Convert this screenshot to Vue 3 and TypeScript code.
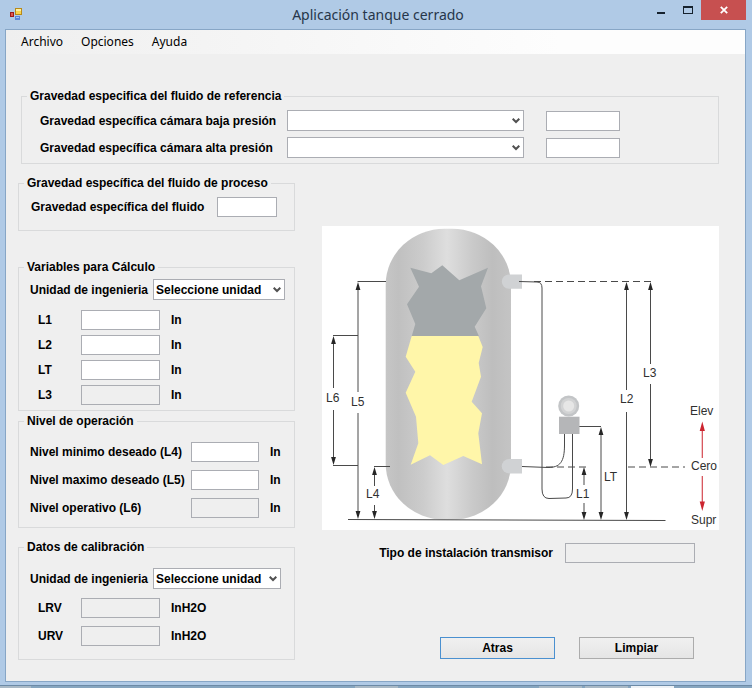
<script setup lang="ts">
import { reactive } from 'vue'

interface Dimension {
  x: number
  top: number
  bottom: number
  gapTop: number
  gapBottom: number
}

interface Field {
  id: string
  label: string
  unit: string
  readonly: boolean
}

const menus: string[] = ['Archivo', 'Opciones', 'Ayuda']

const gravities = [
  { id: 'baja', label: 'Gravedad específica cámara baja presión' },
  { id: 'alta', label: 'Gravedad específica cámara alta presión' },
]

const variables: Field[] = [
  { id: 'l1', label: 'L1', unit: 'In', readonly: false },
  { id: 'l2', label: 'L2', unit: 'In', readonly: false },
  { id: 'lt', label: 'LT', unit: 'In', readonly: false },
  { id: 'l3', label: 'L3', unit: 'In', readonly: true },
]

const levels: Field[] = [
  { id: 'l4', label: 'Nivel minimo deseado (L4)', unit: 'In', readonly: false },
  { id: 'l5', label: 'Nivel maximo deseado (L5)', unit: 'In', readonly: false },
  { id: 'l6', label: 'Nivel operativo (L6)', unit: 'In', readonly: true },
]

const calibration: Field[] = [
  { id: 'lrv', label: 'LRV', unit: 'InH2O', readonly: true },
  { id: 'urv', label: 'URV', unit: 'InH2O', readonly: true },
]

const values = reactive<Record<string, string>>({})

function clearAll(): void {
  Object.keys(values).forEach((key) => {
    values[key] = ''
  })
}

const dimensions: Dimension[] = [
  { x: 333.5, top: 336, bottom: 465, gapTop: 388, gapBottom: 410 },
  { x: 358, top: 282, bottom: 519, gapTop: 392, gapBottom: 413 },
  { x: 374.5, top: 467, bottom: 519, gapTop: 486, gapBottom: 505 },
  { x: 584, top: 467, bottom: 520, gapTop: 485, gapBottom: 503 },
  { x: 601, top: 427, bottom: 520, gapTop: 470, gapBottom: 470 },
  { x: 626.5, top: 282, bottom: 520, gapTop: 390, gapBottom: 412 },
  { x: 650.5, top: 282, bottom: 467, gapTop: 364, gapBottom: 384 },
]

const marks = [
  { text: 'L6', x: 326, y: 402 },
  { text: 'L5', x: 351, y: 406 },
  { text: 'L4', x: 366, y: 498 },
  { text: 'L1', x: 576, y: 498 },
  { text: 'LT', x: 604, y: 481 },
  { text: 'L2', x: 620, y: 403 },
  { text: 'L3', x: 643, y: 377 },
  { text: 'Elev', x: 690, y: 415 },
  { text: 'Cero', x: 691, y: 470 },
  { text: 'Supr', x: 691, y: 524 },
]

function up(x: number, y: number): string {
  return `M${x} ${y}l2.4 8h-4.8z`
}

function down(x: number, y: number): string {
  return `M${x} ${y}l2.4 -8h-4.8z`
}
</script>

<template>
  <div class="window">
    <header class="titlebar">
      <svg class="app-icon" width="14" height="14" viewBox="0 0 14 14" aria-hidden="true">
        <rect x="0.5" y="4.5" width="3" height="4" fill="#e0584e" stroke="#9c1c1c" />
        <rect x="5.5" y="0.5" width="6" height="6" fill="#f8d34c" stroke="#b78a1a" />
        <rect x="6" y="1" width="5" height="2" fill="#fdeea0" />
        <rect x="5" y="8" width="5" height="4" fill="#5b86d8" />
        <rect x="6" y="9" width="3" height="1" fill="#a9c4f2" />
      </svg>
      <h1>Aplicación tanque cerrado</h1>
      <div class="window-buttons">
        <button type="button" class="win-btn" aria-label="Minimizar">
          <svg width="10" height="10" viewBox="0 0 10 10"><rect x="1" y="7" width="8" height="2" fill="#16222e" /></svg>
        </button>
        <button type="button" class="win-btn" aria-label="Maximizar">
          <svg width="10" height="10" viewBox="0 0 10 10"><path d="M0 1h10v8H0zM1 3v5h8V3z" fill="#16222e" fill-rule="evenodd" /></svg>
        </button>
        <button type="button" class="win-btn close" aria-label="Cerrar">
          <svg width="8" height="8" viewBox="0 0 8 8"><path d="M0.8 0.8L7.2 7.2M7.2 0.8L0.8 7.2" stroke="#fff" stroke-width="1.8" /></svg>
        </button>
      </div>
    </header>

    <div class="client">
      <nav class="menu">
        <button v-for="menu in menus" :key="menu" type="button">{{ menu }}</button>
      </nav>

      <main class="form">
        <fieldset class="group reference">
          <legend>Gravedad especifica del fluido de referencia</legend>
          <div class="gravity-grid">
            <template v-for="item in gravities" :key="item.id">
              <label :for="`fluido-${item.id}`">{{ item.label }}</label>
              <span class="combo">
                <select :id="`fluido-${item.id}`"></select>
                <svg width="8" height="6" viewBox="0 0 8 6"><path d="M0.7 0.7L4 4L7.3 0.7" /></svg>
              </span>
              <input v-model="values[item.id]" type="text" :aria-label="item.label" />
            </template>
          </div>
        </fieldset>

        <div class="left">
          <fieldset class="group process">
            <legend>Gravedad específica del fluido de proceso</legend>
            <div class="process-row">
              <label for="proceso">Gravedad específica del fluido</label>
              <input id="proceso" v-model="values.proceso" type="text" />
            </div>
          </fieldset>

          <fieldset class="group variables">
            <legend>Variables para Cálculo</legend>
            <div class="unit-row">
              <label for="unidad-calculo">Unidad de ingenieria</label>
              <span class="combo">
                <select id="unidad-calculo"><option>Seleccione unidad</option></select>
                <svg width="8" height="6" viewBox="0 0 8 6"><path d="M0.7 0.7L4 4L7.3 0.7" /></svg>
              </span>
            </div>
            <div class="fields">
              <template v-for="field in variables" :key="field.id">
                <label :for="field.id">{{ field.label }}</label>
                <input :id="field.id" v-model="values[field.id]" type="text" :readonly="field.readonly" />
                <span>{{ field.unit }}</span>
              </template>
            </div>
          </fieldset>

          <fieldset class="group levels">
            <legend>Nivel de operación</legend>
            <div class="level-grid">
              <template v-for="field in levels" :key="field.id">
                <label :for="field.id">{{ field.label }}</label>
                <input :id="field.id" v-model="values[field.id]" type="text" :readonly="field.readonly" />
                <span>{{ field.unit }}</span>
              </template>
            </div>
          </fieldset>

          <fieldset class="group calibration">
            <legend>Datos de calibración</legend>
            <div class="unit-row">
              <label for="unidad-calibracion">Unidad de ingenieria</label>
              <span class="combo">
                <select id="unidad-calibracion"><option>Seleccione unidad</option></select>
                <svg width="8" height="6" viewBox="0 0 8 6"><path d="M0.7 0.7L4 4L7.3 0.7" /></svg>
              </span>
            </div>
            <div class="fields">
              <template v-for="field in calibration" :key="field.id">
                <label :for="field.id">{{ field.label }}</label>
                <input :id="field.id" v-model="values[field.id]" type="text" :readonly="field.readonly" />
                <span>{{ field.unit }}</span>
              </template>
            </div>
          </fieldset>
        </div>

        <div class="right">
          <svg class="diagram" viewBox="322 226 397 304" role="img" aria-label="Tanque cerrado">
            <defs>
              <linearGradient id="steel">
                <stop offset="0" stop-color="#c6c6c6" />
                <stop offset="0.1" stop-color="#c0c0c0" />
                <stop offset="0.3" stop-color="#cccccc" />
                <stop offset="0.49" stop-color="#dedede" />
                <stop offset="0.7" stop-color="#c9c9c9" />
                <stop offset="0.85" stop-color="#bebebe" />
                <stop offset="1" stop-color="#c4c4c4" />
              </linearGradient>
            </defs>
            <rect x="385.7" y="228.7" width="125.3" height="291" rx="59" ry="56" fill="url(#steel)" />
            <polygon
              fill="#a3a8aa"
              points="410.3,267.7 431.3,273.3 442.3,265.3 459.3,280.3 488,267.7 481,286.3 486.3,308.3 474.7,326.7 479,336.2 411.7,336.2 415.3,324 407,304.3 419,286.7"
            />
            <polygon
              fill="#fff6a9"
              points="411.7,336 478.3,336 482.7,347 478.7,363 481,376.7 471.7,401.7 482,413.3 478.3,433.3 482,464.2 463.3,456 443.3,465 430,455.3 410.7,464.8 418.3,443.3 416,416.7 405.7,392.7 415.3,371.7 405.7,356.7"
            />
            <path d="M522 274.5v14.3h-13a7 7 0 0 1 0 -14.3z" fill="#d0d2d4" />
            <path d="M522 459v14.5h-13a7 7 0 0 1 0 -14.5z" fill="#d0d2d4" />

            <g class="thin">
              <path d="M357.5 281.5H386M333 335.5H358M333 465.5H358M374 466.5H390" />
              <path d="M348 519.5L665.5 520.5" />
              <path d="M519 281.5L537 282Q542 282 542 288V489Q542 498.5 549 498.5L566 498Q572.5 498 572.5 489V433" />
              <path d="M522 466.5L548 467.5C560 467.5 564.5 462 564.5 445V433" />
              <path d="M578 426.5H601" />
              <path d="M534 281.5H651" stroke-dasharray="7 4" />
              <path d="M546 467H586" stroke-dasharray="7 4" />
              <path d="M628 467H685" stroke-dasharray="7 4" />
              <path
                v-for="d in dimensions"
                :key="`line-${d.x}`"
                :d="`M${d.x} ${d.top + 3}V${d.gapTop}M${d.x} ${d.gapBottom}V${d.bottom - 3}`"
              />
            </g>
            <g fill="#262626">
              <path v-for="d in dimensions" :key="`head-${d.x}`" :d="up(d.x, d.top) + down(d.x, d.bottom)" />
            </g>

            <circle cx="568.7" cy="406" r="10.5" fill="#c3c5c7" />
            <circle cx="568.7" cy="406" r="8" fill="#d2d3d4" />
            <circle cx="568.7" cy="406" r="5.5" fill="#e6e6e6" />
            <rect x="559" y="416.7" width="20.5" height="17.3" fill="#b5b6b8" />

            <path d="M702.3 430V458M702.3 476V503" stroke="#d4484f" stroke-width="1.2" />
            <path d="M702.3 421.5l2.6 9.5h-5.2zM702.3 511l2.6 -9.5h-5.2z" fill="#cc2530" />

            <text v-for="mark in marks" :key="mark.text" :x="mark.x" :y="mark.y">{{ mark.text }}</text>
          </svg>

          <div class="type-row">
            <label for="tipo">Tipo de instalación transmisor</label>
            <input id="tipo" v-model="values.tipo" type="text" readonly />
          </div>

          <div class="actions">
            <button type="button" class="primary">Atras</button>
            <button type="button" @click="clearAll">Limpiar</button>
          </div>
        </div>
      </main>
    </div>

    <footer class="taskbar" aria-hidden="true">
      <i></i><span></span><i></i><span></span><i></i><i></i><i class="active"></i>
    </footer>
  </div>
</template>

<style>
body {
  margin: 0;
}
</style>

<style scoped>
.window {
  display: flex;
  flex-direction: column;
  min-height: 100vh;
  background: #b0cae6;
  color: #000;
  font: bold 12px/16px "Liberation Sans", Arial, sans-serif;
}

.titlebar {
  display: grid;
  grid-template-columns: 1fr auto 1fr;
  height: 29px;
  padding: 0 6px 0 10px;
}

.app-icon {
  margin-top: 8px;
}

h1 {
  margin: 0;
  color: #26364a;
  font: 14px/30px "Noto Sans", sans-serif;
}

.window-buttons {
  display: flex;
  justify-content: flex-end;
  align-items: flex-start;
}

.win-btn {
  display: grid;
  place-items: center;
  width: 27px;
  height: 20px;
  padding: 0;
  border: 0;
  background: none;
}

.win-btn.close {
  width: 45px;
  background: #c75050;
}

.client {
  flex: 1;
  margin: 0 6px 3px 5px;
  border: 1px solid #87a6c6;
  background: #efefef;
}

.menu {
  display: flex;
  gap: 2px;
  height: 24px;
  padding-left: 7px;
  background: linear-gradient(90deg, #efefef, #fdfdfd 75%);
}

.menu button {
  padding: 0 8px;
  border: 0;
  background: none;
  color: #000;
  font: 12px/24px "Noto Sans", sans-serif;
}

.form {
  display: grid;
  grid-template-columns: 277px 1fr;
  column-gap: 27px;
  row-gap: 11px;
  padding: 34px 26px 20px 12px;
}

.group {
  min-width: 0;
  margin: 0;
  padding: 0 5px;
  border: 1px solid #d9dadb;
}

legend {
  padding: 0 3px;
}

label {
  white-space: nowrap;
}

.reference {
  grid-column: 1 / -1;
  margin-left: 3px;
}

.gravity-grid {
  display: grid;
  grid-template-columns: 238px 237px 87px;
  column-gap: 9px;
  row-gap: 6px;
  align-items: center;
  padding: 6px 0 5px 13px;
}

.gravity-grid input {
  justify-self: end;
  width: 74px;
}

input,
select {
  box-sizing: border-box;
  width: 100%;
  height: 20px;
  margin: 0;
  padding: 0 3px;
  border: 1px solid #abadb3;
  border-radius: 0;
  background: #fff;
  color: #000;
  font: inherit;
}

select {
  height: 21px;
  padding: 0 2px;
  appearance: none;
}

input[readonly] {
  background: #efefef;
}

.combo {
  display: grid;
  align-items: center;
}

.combo > * {
  grid-area: 1 / 1;
}

.combo svg {
  justify-self: end;
  margin-right: 4px;
  pointer-events: none;
  fill: none;
  stroke: #505050;
  stroke-width: 2;
}

.left {
  display: flex;
  flex-direction: column;
}

.process-row {
  display: grid;
  grid-template-columns: 176px 60px;
  column-gap: 10px;
  align-items: center;
  padding: 6px 0 13px 7px;
}

.variables {
  margin-top: 28px;
}

.unit-row {
  display: grid;
  grid-template-columns: 117px 132px;
  column-gap: 6px;
  align-items: center;
  padding: 4px 0 0 6px;
}

.fields {
  display: grid;
  grid-template-columns: 32px 79px 1fr;
  column-gap: 11px;
  row-gap: 5px;
  align-items: center;
  padding: 10px 0 5px 14px;
}

.levels {
  margin-top: 2px;
}

.level-grid {
  display: grid;
  grid-template-columns: 155px 68px 1fr;
  column-gap: 6px;
  row-gap: 8px;
  align-items: center;
  padding: 13px 0 9px 6px;
}

.level-grid span {
  padding-left: 5px;
}

.calibration {
  margin-top: 11px;
}

.calibration .unit-row {
  grid-template-columns: 117px 128px;
  padding-top: 13px;
}

.calibration .fields {
  row-gap: 8px;
  padding-top: 9px;
  padding-bottom: 13px;
}

.right {
  padding-top: 51px;
}

.diagram {
  display: block;
  width: 100%;
  background: #fff;
}

.diagram text {
  fill: #303030;
  font: 12px "Liberation Sans", sans-serif;
}

.thin {
  fill: none;
  stroke: #4a4a4a;
  stroke-width: 1;
}

.type-row {
  display: flex;
  justify-content: flex-end;
  align-items: center;
  gap: 12px;
  padding: 13px 24px 0 0;
}

.type-row input {
  width: 130px;
}

.actions {
  display: flex;
  justify-content: flex-end;
  gap: 24px;
  padding: 74px 25px 0 0;
}

.actions button {
  width: 115px;
  height: 22px;
  padding: 0;
  border: 1px solid #acacac;
  background: linear-gradient(#f0f0f0, #e5e5e5);
  color: #000;
  font: inherit;
}

.actions .primary {
  border-color: #4a90d0;
}

.taskbar {
  display: grid;
  grid-template-columns: 31px 318px 43px 135px 43px 43px 43px;
  column-gap: 3px;
  height: 2px;
  border-top: 1px solid #6c8aa6;
  background: #86a5bf;
}

.taskbar i {
  background: #a9b9c6;
}

.taskbar .active {
  background: #eef2f6;
}
</style>
